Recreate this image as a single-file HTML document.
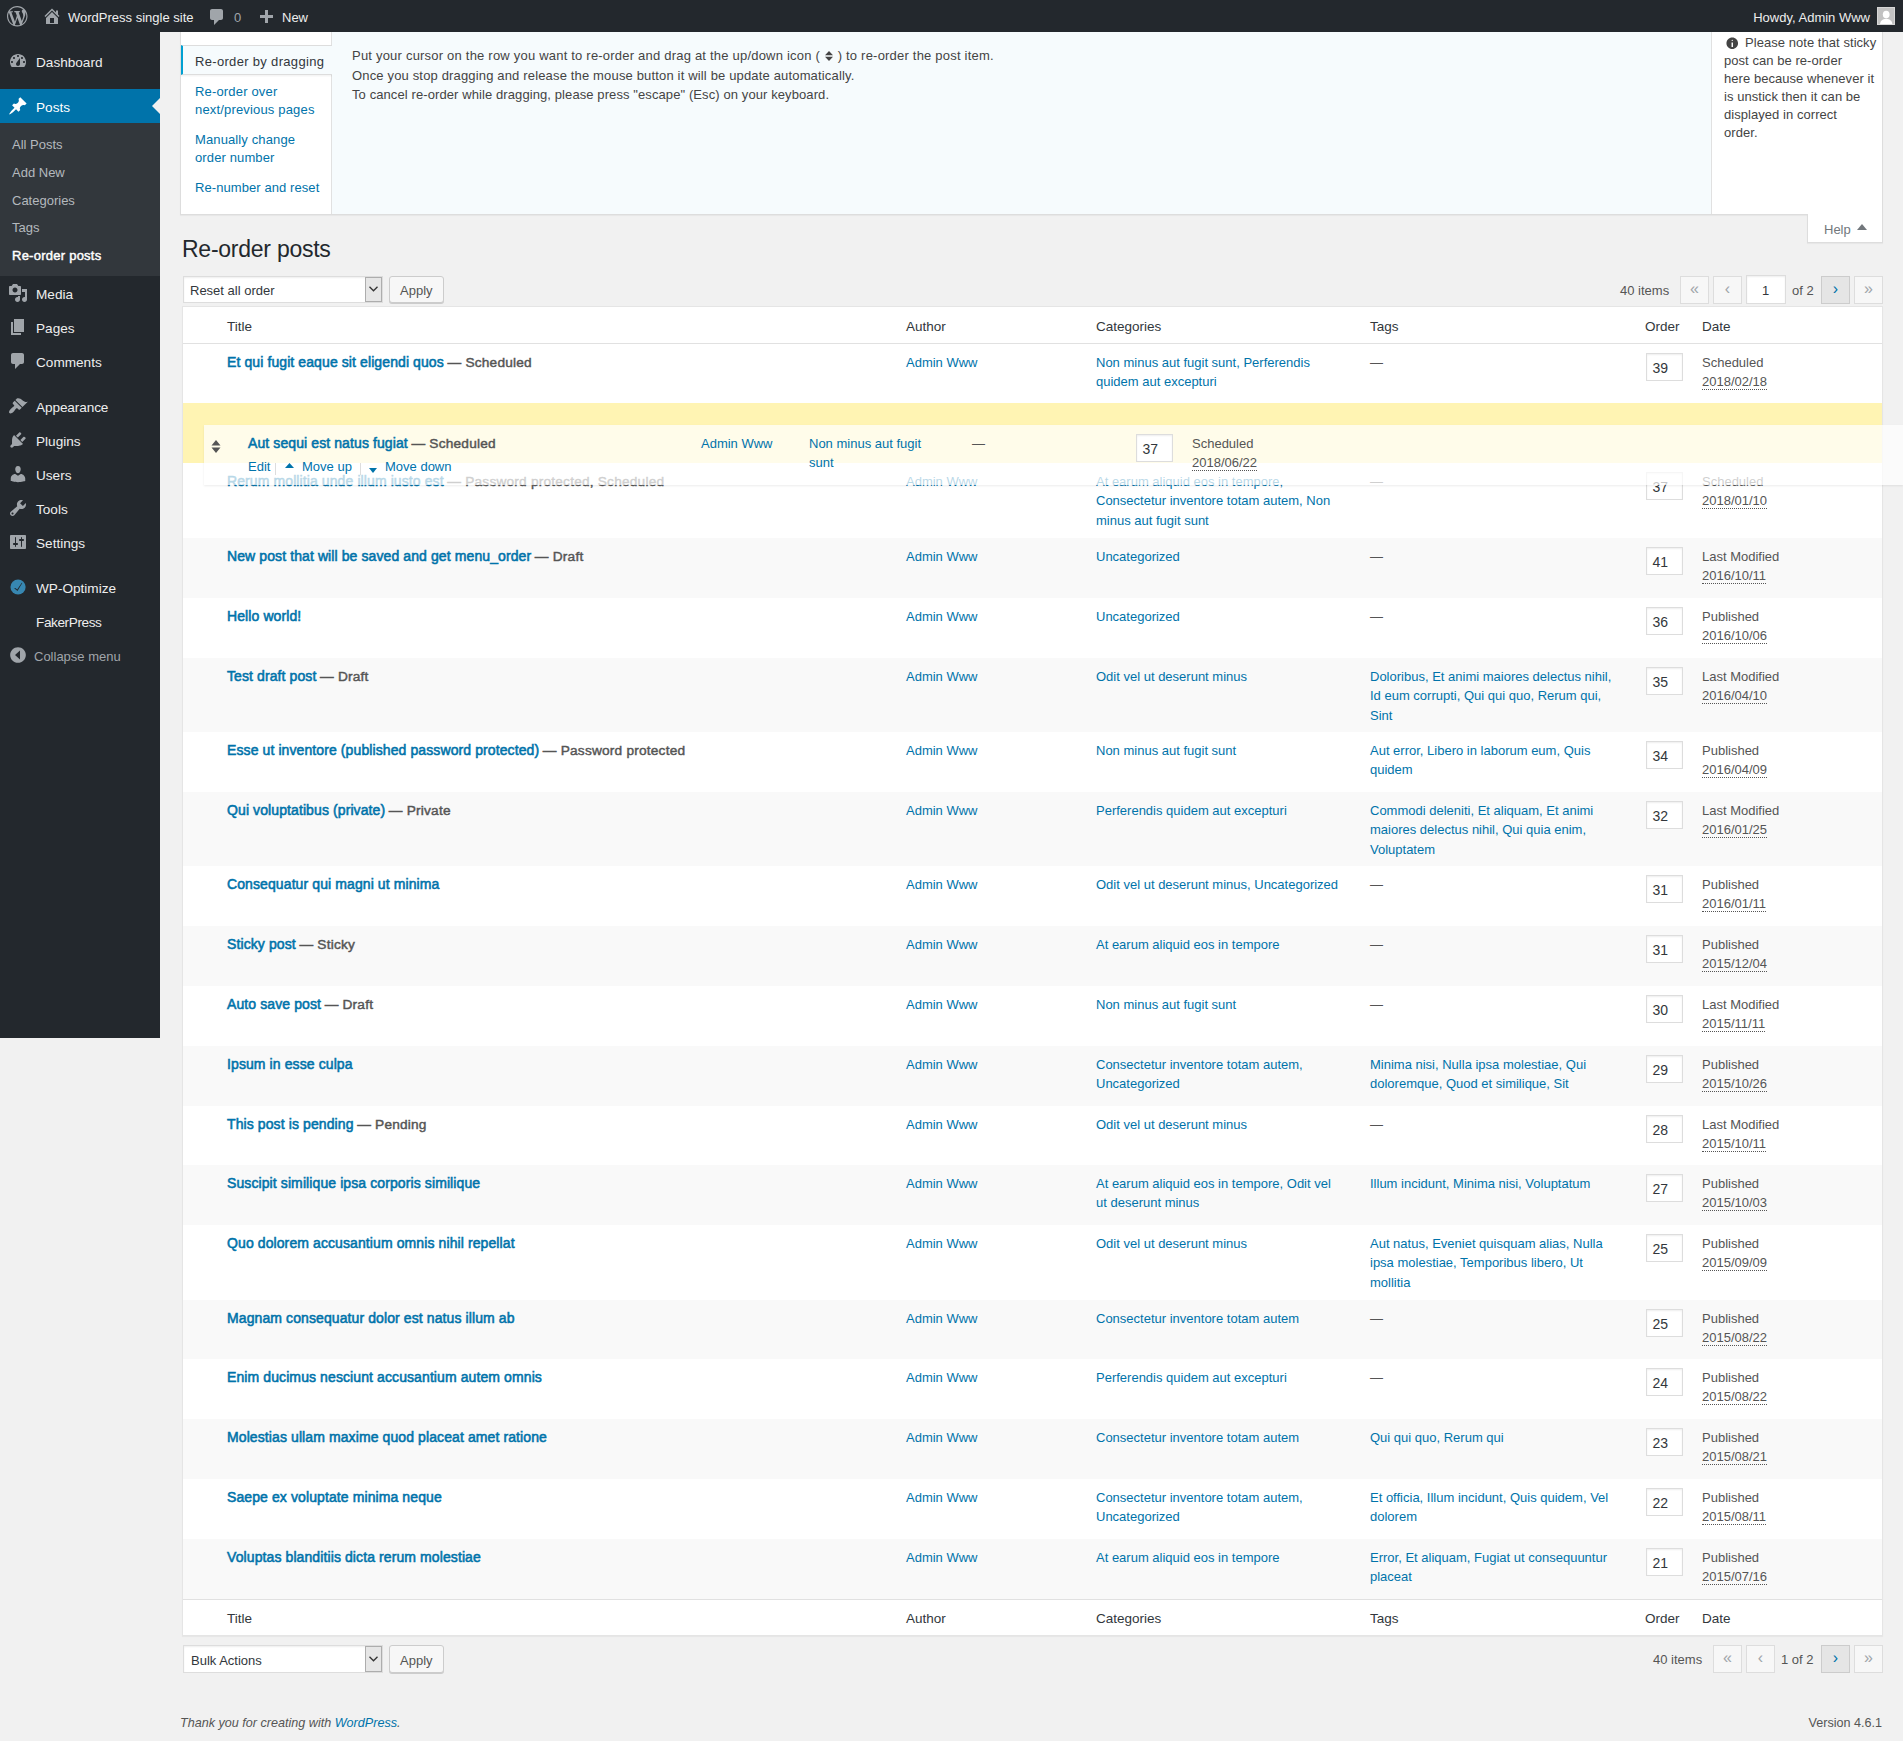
<!DOCTYPE html>
<html><head><meta charset="utf-8"><title>Re-order posts</title>
<style>
*{box-sizing:border-box}
html,body{margin:0;padding:0}
body{width:1903px;height:1741px;overflow:hidden;position:relative;background:#f1f1f1;font-family:"Liberation Sans",sans-serif;font-size:13px;color:#444;}
a{color:#0073aa;text-decoration:none}
.abs{position:absolute;white-space:nowrap}
.t13{font-size:13px;line-height:20px}
.t14{font-size:14px;line-height:20px}
#bar{position:absolute;left:0;top:0;width:1903px;height:32px;background:#23282d;color:#eee}
#menuback{position:absolute;left:0;top:32px;width:160px;height:1006px;background:#23282d}
.mi{position:absolute;left:36px;font-size:13.6px;line-height:20px;color:#eee;white-space:nowrap}
.smi{position:absolute;left:12px;font-size:13px;line-height:20px;color:#b4b9be;white-space:nowrap}
.ico{position:absolute;fill:#a0a5aa}
/* help */
#help{position:absolute;left:180px;top:32px;width:1703px;height:183px;background:#fff;border:1px solid #ddd;border-top:none;box-shadow:0 1px 1px rgba(0,0,0,.04)}
#helpback{position:absolute;left:331px;top:32px;width:1381px;height:182px;background:#f6fbfd;border-left:1px solid #e1e1e1;border-right:1px solid #e1e1e1}
#acttab{position:absolute;left:181px;top:45px;width:151px;height:30px;background:#f6fbfd;border-left:2px solid #00a0d2;border-top:1px solid #ddd;border-bottom:1px solid #ddd;box-shadow:0 2px 0 rgba(0,0,0,.02),0 1px 0 rgba(0,0,0,.02)}
#helptab{position:absolute;left:1807px;top:214px;width:76px;height:29px;background:#fff;border:1px solid #ddd;border-top:none;box-shadow:0 1px 1px rgba(0,0,0,.04)}
/* controls */
.sel{position:absolute;background:#fff;border:1px solid #ddd;box-shadow:inset 0 1px 2px rgba(0,0,0,.07)}
.selarr{position:absolute;background:#e6e6e6;border:1px solid #adadad}
.btn{position:absolute;background:#f7f7f7;border:1px solid #ccc;border-radius:3px;box-shadow:0 1px 0 #ccc}
.pbtn{position:absolute;width:29px;height:28px;background:#f7f7f7;border:1px solid #ddd;text-align:center;color:#a0a5aa;font-size:16px;line-height:24px}
.pbtn.on{background:#e5e5e5;border-color:#ccc;color:#0073aa}
/* table */
#table{position:absolute;left:182px;top:306px;width:1701px;height:1330px;background:#fff;border:1px solid #e5e5e5;box-shadow:0 1px 1px rgba(0,0,0,.04)}
.th{position:absolute;font-size:13.5px;line-height:20px;color:#32373c;white-space:nowrap}
.row{position:absolute;left:183px;width:1699px}
.row .c{position:absolute;top:8.5px;font-size:13px;line-height:19.5px;white-space:nowrap;color:#555}
.row .ti{left:44px}
.row .au{left:723px}
.row .ca{left:913px}
.row .tg{left:1187px}
.row .dt{left:1519px}
.rt{font-size:14px;letter-spacing:0.1px;-webkit-text-stroke:0.55px #0073aa}
.st{font-size:13.7px;letter-spacing:0.2px;color:#555;-webkit-text-stroke:0.45px #555}
.ord{position:absolute;left:1463px;top:9px;width:37px;height:28px;border:1px solid #ddd;background:#fff;box-shadow:inset 0 1px 2px rgba(0,0,0,.07);color:#32373c;font-size:14px;line-height:28px;padding-left:5.5px}
abbr{border-bottom:1px dotted #555;text-decoration:none}
.dash{color:#555}
#placeholder{position:absolute;left:183px;top:403px;width:1699px;height:60px;background:#fff4b3}
#helper{position:absolute;left:204px;top:425px;width:1699px;height:60px;background:rgba(255,255,255,.72);box-shadow:0 1px 2px rgba(0,0,0,.08)}
#helper .c{position:absolute;top:8.5px;font-size:13px;line-height:19.5px;white-space:nowrap;color:#555}
</style></head>
<body>
<!-- admin bar -->
<div id="bar">
  <svg class="ico" style="left:7px;top:6px" width="20.5" height="20.5" viewBox="0 0 20 20"><path d="M20 10c0-5.51-4.49-10-10-10C4.48 0 0 4.49 0 10c0 5.52 4.48 10 10 10 5.51 0 10-4.48 10-10zM7.78 15.37L4.37 6.22c.55-.02 1.170-.08 1.17-.08.5-.06.44-1.13-.06-1.11 0 0-1.45.11-2.37.11-.18 0-.37 0-.58-.01C4.120 2.690 6.870 1.110 10 1.110c2.330 0 4.450.87 6.050 2.34-.68-.11-1.650.39-1.650 1.580 0 .74.450 1.360.9 2.1.35.61.55 1.36.55 2.46 0 1.49-1.4 5-1.4 5l-3.03-8.37c.54-.02.82-.17.82-.17.5-.05.44-1.25-.06-1.22 0 0-1.44.12-2.38.12-.87 0-2.33-.12-2.33-.12-.5-.03-.56 1.200-.06 1.220l.92.08 1.26 3.41zM17.41 10c.24-.64.74-1.870.43-4.250.7 1.290 1.050 2.710 1.050 4.250 0 3.290-1.730 6.240-4.400 7.780.970-2.590 1.940-5.200 2.920-7.780zM6.1 18.09C3.12 16.65 1.11 13.53 1.11 10c0-1.3.23-2.48.72-3.59C3.25 10.3 4.670 14.200 6.100 18.090zm4.030-6.630l2.580 6.980c-.86.290-1.760.450-2.710.450-.790 0-1.570-.110-2.290-.330.810-2.380 1.620-4.740 2.420-7.100z"/></svg>
  <svg class="ico" style="left:42px;top:6px" width="20" height="20" viewBox="0 0 20 20"><path d="M16 8.5l1.53 1.53-1.06 1.06L10 4.62l-6.47 6.47-1.06-1.06L10 2.5l4 4v-2h2v4zm-6-2.46l6 5.99V18H4v-5.97zM12 17v-5H8v5h4z"/></svg>
  <div class="abs t13" style="left:68px;top:8px;color:#eee">WordPress single site</div>
  <svg class="ico" style="left:207px;top:7px" width="20" height="20" viewBox="0 0 20 20"><path d="M5 2h9c1.1 0 2 .9 2 2v7c0 1.1-.9 2-2 2h-2l-5 5v-5H5c-1.1 0-2-.9-2-2V4c0-1.1.9-2 2-2z"/></svg>
  <div class="abs t13" style="left:234px;top:8px;color:#a0a5aa">0</div>
  <svg class="ico" style="left:256px;top:8px" width="20" height="20" viewBox="0 0 20 20"><path d="M17 7v3h-5v5H9v-5H4V7h5V2h3v5h5z"/></svg>
  <div class="abs t13" style="left:282px;top:8px;color:#eee">New</div>
  <div class="abs t13" style="right:33px;top:8px;color:#eee">Howdy, Admin Www</div>
  <div class="abs" style="left:1877px;top:7px;width:18px;height:18px;background:#c2c2c2;border:1px solid #d6d6d6;overflow:hidden">
    <svg style="position:absolute;left:-1px;top:-1px" width="18" height="18" viewBox="0 0 18 18"><ellipse cx="9.2" cy="7.6" rx="3.4" ry="3.8" fill="#fff"/><path d="M3 18c0-3.5 1.8-6 6.2-6s6.2 2.5 6.2 6z" fill="#fff"/></svg>
  </div>
</div>

<!-- sidebar -->
<div id="menuback"></div>
<div class="abs" style="left:0;top:89px;width:160px;height:34px;background:#0073aa"></div>
<div class="abs" style="left:152px;top:98px;width:0;height:0;border-top:8px solid transparent;border-bottom:8px solid transparent;border-right:8px solid #f1f1f1"></div>
<div class="abs" style="left:0;top:123px;width:160px;height:153px;background:#32373c"></div>
<!-- icons -->
<svg class="ico" style="left:8px;top:51px" width="20" height="20" viewBox="0 0 20 20"><path fill-rule="evenodd" d="M3.76 16h12.48c1.1-1.37 1.76-3.11 1.76-5 0-4.42-3.58-8-8-8s-8 3.58-8 8c0 1.89.66 3.63 1.76 5zM10 4c.55 0 1 .45 1 1s-.45 1-1 1-1-.45-1-1 .45-1 1-1zM6 6c.55 0 1 .45 1 1s-.45 1-1 1-1-.45-1-1 .45-1 1-1zm8 0c.55 0 1 .45 1 1s-.45 1-1 1-1-.45-1-1 .45-1 1-1zm-5.37 5.55L12 7v6c0 1.1-.9 2-2 2s-2-.9-2-2c0-.57.24-1.08.63-1.450zM4 10c.55 0 1 .45 1 1s-.45 1-1 1-1-.45-1-1 .45-1 1-1zm12 0c.55 0 1 .45 1 1s-.45 1-1 1-1-.45-1-1 .45-1 1-1z"/></svg>
<svg class="ico" style="left:8px;top:96px;fill:#fff" width="20" height="20" viewBox="0 0 20 20"><path fill-rule="evenodd" d="M10.44 3.02l1.82-1.82 6.36 6.35-1.83 1.82c-1.05-.68-2.48-.57-3.41.36l-.75.75c-.92.93-1.04 2.35-.35 3.41l-1.83 1.82-2.41-2.41-2.8 2.79c-.42.42-3.38 2.71-3.8 2.29s1.86-3.39 2.28-3.81l2.79-2.79L4.1 9.36l1.83-1.82c1.05.69 2.48.57 3.4-.36l.75-.75c.93-.92 1.05-2.35.36-3.41z"/></svg>
<svg class="ico" style="left:8px;top:283px" width="20" height="20" viewBox="0 0 20 20"><path fill-rule="evenodd" d="M13 11V4c0-.55-.45-1-1-1h-1.67L9 1H5L3.67 3H2c-.55 0-1 .45-1 1v7c0 .55.45 1 1 1h10c.55 0 1-.45 1-1zM7 4.5c1.38 0 2.5 1.12 2.5 2.5S8.38 9.5 7 9.5 4.5 8.38 4.5 7 5.62 4.5 7 4.5zM14 6h5v10.5c0 1.38-1.12 2.5-2.5 2.5S14 17.88 14 16.5s1.12-2.5 2.5-2.5c.17 0 .34.02.5.05V9h-3V6zm-4 8.05V13h2v3.5c0 1.38-1.12 2.5-2.5 2.5S7 17.88 7 16.5 8.12 14 9.5 14c.17 0 .34.02.5.05z"/></svg>
<svg class="ico" style="left:8px;top:317px" width="20" height="20" viewBox="0 0 20 20"><path fill-rule="evenodd" d="M6 15V2h10v13H6zm-1 1h8v2H3V5h2v11z"/></svg>
<svg class="ico" style="left:8px;top:351px" width="20" height="20" viewBox="0 0 20 20"><path fill-rule="evenodd" d="M5 2h9c1.1 0 2 .9 2 2v7c0 1.1-.9 2-2 2h-2l-5 5v-5H5c-1.1 0-2-.9-2-2V4c0-1.1.9-2 2-2z"/></svg>
<svg class="ico" style="left:8px;top:396px" width="20" height="20" viewBox="0 0 20 20"><path fill-rule="evenodd" d="M14.48 11.06L7.41 3.99l1.5-1.5c.5-.56 2.3-.47 3.51.32 1.21.8 1.43 1.28 2.91 2.1 1.18.64 2.45 1.26 4.45.85zm-.71.71L6.7 4.7 4.93 6.47c-.39.39-.39 1.02 0 1.41l1.06 1.06c.39.39.39 1.03 0 1.42-.6.6-1.43 1.11-2.21 1.69-.35.26-.7.53-1.01.84C1.430 14.230.4 16.080 1.4 17.070c.99 1 2.840-.03 4.180-1.360.31-.31.58-.66.85-1.020.57-.78 1.080-1.610 1.690-2.210.39-.39 1.020-.39 1.410 0l1.060 1.060c.39.39 1.020.39 1.410 0z"/></svg>
<svg class="ico" style="left:8px;top:430px" width="20" height="20" viewBox="0 0 20 20"><path fill-rule="evenodd" d="M13.11 4.36L9.87 7.6 8 5.73l3.24-3.24c.35-.34 1.05-.2 1.56.32.52.51.66 1.21.31 1.55zm-8 1.77l.91-1.12 9.01 9.01-1.19.84c-.71.71-2.630 1.160-3.820 1.160H6.14L4.9 17.26c-.59.59-1.54.59-2.12 0-.59-.58-.59-1.53 0-2.12l1.24-1.24v-3.88c0-1.13.4-3.19 1.09-3.89zm7.26 3.97l3.24-3.24c.34-.35 1.04-.21 1.55.31.52.51.66 1.21.31 1.55l-3.24 3.25z"/></svg>
<svg class="ico" style="left:8px;top:464px" width="20" height="20" viewBox="0 0 20 20"><path fill-rule="evenodd" d="M10 9.25c-2.27 0-2.73-3.44-2.73-3.44C7 4.02 7.82 2 9.97 2c2.16 0 2.98 2.02 2.71 3.81 0 0-.41 3.44-2.68 3.44zm0 2.57L12.72 10c2.39 0 4.52 2.33 4.52 4.53v2.49s-3.65 1.13-7.24 1.13c-3.65 0-7.24-1.13-7.24-1.13v-2.49c0-2.25 1.94-4.48 4.47-4.48z"/></svg>
<svg class="ico" style="left:8px;top:498px" width="20" height="20" viewBox="0 0 20 20"><path fill-rule="evenodd" d="M16.68 9.77c-1.34 1.34-3.3 1.67-4.95.99l-5.41 6.52c-.99.99-2.59.99-3.58 0s-.99-2.59 0-3.57l6.52-5.42c-.68-1.65-.35-3.61.99-4.95 1.28-1.28 3.12-1.62 4.72-1.06l-2.89 2.89 2.82 2.82 2.86-2.87c.53 1.58.18 3.39-1.08 4.65zM3.81 16.21c.4.39 1.04.39 1.430 0 .4-.4.4-1.04 0-1.43-.39-.4-1.03-.4-1.430 0-.39.39-.39 1.030 0 1.430z"/></svg>
<svg class="ico" style="left:8px;top:532px" width="20" height="20" viewBox="0 0 20 20"><path fill-rule="evenodd" d="M18 16V4c0-.55-.45-1-1-1H3c-.55 0-1 .45-1 1v12c0 .55.45 1 1 1h14c.55 0 1-.45 1-1zM8 11h1c.55 0 1 .45 1 1s-.45 1-1 1H8v1.5c0 .28-.22.5-.5.5s-.5-.22-.5-.5V13H6c-.55 0-1-.45-1-1s.45-1 1-1h1V5.5c0-.28.22-.5.5-.5s.5.22.5.5V11zm5-2h-1c-.55 0-1-.45-1-1s.45-1 1-1h1V5.5c0-.28.22-.5.5-.5s.5.22.5.5V7h1c.55 0 1 .45 1 1s-.45 1-1 1h-1v5.5c0 .28-.22.5-.5.5s-.5-.22-.5-.5V9z"/></svg>
<svg class="ico" style="left:8px;top:577px" width="20" height="20" viewBox="0 0 20 20"><circle cx="10.05" cy="10" r="7.6" fill="#3787b1"/><path d="M6.1 11.2l1.2-.3 1.9 1.6 4.6-6.8.5.3-4.8 8z" fill="#23282d"/></svg>
<svg class="ico" style="left:8px;top:645px" width="20" height="20" viewBox="0 0 20 20"><path fill-rule="evenodd" d="M10 2.16c4.33 0 7.84 3.51 7.84 7.84S14.33 17.84 10 17.84 2.16 14.33 2.16 10 5.71 2.16 10 2.160zM12 5.5L7 10l5 4.5z"/></svg>
<div class="mi" style="top:53px">Dashboard</div>
<div class="mi" style="top:98px;color:#fff">Posts</div>
<div class="smi" style="top:135px">All Posts</div>
<div class="smi" style="top:163px">Add New</div>
<div class="smi" style="top:191px">Categories</div>
<div class="smi" style="top:218px">Tags</div>
<div class="smi" style="top:246px;color:#fff;letter-spacing:0.25px;-webkit-text-stroke:0.45px #fff">Re-order posts</div>
<div class="mi" style="top:285px">Media</div>
<div class="mi" style="top:319px">Pages</div>
<div class="mi" style="top:353px">Comments</div>
<div class="mi" style="top:398px;letter-spacing:-0.1px">Appearance</div>
<div class="mi" style="top:432px">Plugins</div>
<div class="mi" style="top:466px">Users</div>
<div class="mi" style="top:500px">Tools</div>
<div class="mi" style="top:534px">Settings</div>
<div class="mi" style="top:579px">WP-Optimize</div>
<div class="mi" style="top:613px;letter-spacing:-0.4px">FakerPress</div>
<div class="smi" style="left:34px;top:647px;color:#a0a5aa">Collapse menu</div>

<!-- help panel -->
<div id="help"></div>
<div id="helpback"></div>
<div class="abs" style="left:181px;top:45px;width:150px;height:1px;background:#ddd"></div>
<div id="acttab"></div>
<div class="abs t13" style="left:195px;top:52px;color:#32373c;letter-spacing:0.32px">Re-order by dragging</div>
<div class="abs" style="left:195px;top:83px;font-size:13px;line-height:18px;letter-spacing:0.17px"><a>Re-order over<br>next/previous pages</a></div>
<div class="abs" style="left:195px;top:131px;font-size:13px;line-height:18px;letter-spacing:0.12px"><a>Manually change<br>order number</a></div>
<div class="abs" style="left:195px;top:179px;font-size:13px;line-height:18px;letter-spacing:0.08px"><a>Re-number and reset</a></div>
<div class="abs" style="left:352px;top:46px;font-size:13px;line-height:19.5px;color:#444;letter-spacing:0.21px">Put your cursor on the row you want to re-order and drag at the up/down icon ( <svg width="8" height="10" viewBox="0 0 8 10" style="vertical-align:-1px;margin:0 1px"><path d="M4 0L8 4.3H0zM0 5.7h8L4 10z" fill="#444"/></svg> ) to re-order the post item.</div>
<div class="abs" style="left:352px;top:65.5px;font-size:13px;line-height:19.5px;color:#444;letter-spacing:0.16px">Once you stop dragging and release the mouse button it will be update automatically.</div>
<div class="abs" style="left:352px;top:85px;font-size:13px;line-height:19.5px;color:#444;letter-spacing:0.095px">To cancel re-order while dragging, please press "escape" (Esc) on your keyboard.</div>
<svg class="abs" style="left:1725px;top:35.5px" width="14.5" height="14.5" viewBox="0 0 20 20"><path fill="#444" fill-rule="evenodd" d="M10 2c4.42 0 8 3.58 8 8s-3.58 8-8 8-8-3.58-8-8 3.58-8 8-8zm1 4c0-.55-.45-1-1-1s-1 .45-1 1 .45 1 1 1 1-.45 1-1zm0 9V9H9v6h2z"/></svg>
<div class="abs" style="left:1724px;top:34px;font-size:13px;line-height:18px;color:#444;letter-spacing:0.05px;text-indent:21px">Please note that sticky<br>post can be re-order<br>here because whenever it<br>is unstick then it can be<br>displayed in correct<br>order.</div>
<div id="helptab"></div>
<div class="abs t13" style="left:1824px;top:220px;color:#72777c">Help</div>
<div class="abs" style="left:1857px;top:224px;width:0;height:0;border-left:5px solid transparent;border-right:5px solid transparent;border-bottom:6px solid #72777c"></div>

<!-- title -->
<div class="abs" style="left:182px;top:234px;font-size:23px;letter-spacing:-0.25px;line-height:30px;color:#23282d">Re-order posts</div>

<!-- top tablenav -->
<div class="sel" style="left:183px;top:276px;width:200px;height:27px"></div>
<div class="selarr" style="left:365px;top:277px;width:17px;height:25px"></div>
<svg class="abs" style="left:369px;top:286px" width="9" height="6" viewBox="0 0 9 6"><path d="M.5.8l4 4 4-4" stroke="#333" stroke-width="1.3" fill="none"/></svg>
<div class="abs t13" style="left:190px;top:281px;color:#32373c">Reset all order</div>
<div class="btn" style="left:389px;top:276px;width:55px;height:27px"></div>
<div class="abs t13" style="left:400px;top:281px;color:#555">Apply</div>
<div class="abs t13" style="left:1620px;top:281px;color:#555">40 items</div>
<div class="pbtn" style="left:1680px;top:276px">«</div>
<div class="pbtn" style="left:1713px;top:276px">‹</div>
<div class="sel" style="left:1746px;top:275px;width:40px;height:29px"></div>
<div class="abs t13" style="left:1762px;top:281px;color:#32373c">1</div>
<div class="abs t13" style="left:1792px;top:281px;color:#555">of 2</div>
<div class="pbtn on" style="left:1821px;top:276px">›</div>
<div class="pbtn" style="left:1854px;top:276px">»</div>

<!-- table -->
<div id="table"></div>
<div class="abs" style="left:183px;top:343px;width:1699px;height:1px;background:#e1e1e1"></div>
<div class="th" style="left:227px;top:317px">Title</div>
<div class="th" style="left:906px;top:317px">Author</div>
<div class="th" style="left:1096px;top:317px">Categories</div>
<div class="th" style="left:1370px;top:317px">Tags</div>
<div class="th" style="left:1645px;top:317px">Order</div>
<div class="th" style="left:1702px;top:317px">Date</div>

<div class="row" style="top:344px;height:59px;background:#fff">
<div class="c ti"><a class="rt">Et qui fugit eaque sit eligendi quos</a> <span class="st">— Scheduled</span></div>
<div class="c au"><a>Admin Www</a></div>
<div class="c ca"><a>Non minus aut fugit sunt, Perferendis<br>quidem aut excepturi</a></div>
<div class="c tg"><span class="dash">—</span></div>
<div class="ord">39</div>
<div class="c dt">Scheduled<br><abbr>2018/02/18</abbr></div>
</div>
<div class="row" style="top:463px;height:75px;background:#fff">
<div class="c ti"><a class="rt">Rerum mollitia unde illum iusto est</a> <span class="st">— Password protected, Scheduled</span></div>
<div class="c au"><a>Admin Www</a></div>
<div class="c ca"><a>At earum aliquid eos in tempore,<br>Consectetur inventore totam autem, Non<br>minus aut fugit sunt</a></div>
<div class="c tg"><span class="dash">—</span></div>
<div class="ord">37</div>
<div class="c dt">Scheduled<br><abbr>2018/01/10</abbr></div>
</div>
<div class="row" style="top:538px;height:60px;background:#f9f9f9">
<div class="c ti"><a class="rt">New post that will be saved and get menu_order</a> <span class="st">— Draft</span></div>
<div class="c au"><a>Admin Www</a></div>
<div class="c ca"><a>Uncategorized</a></div>
<div class="c tg"><span class="dash">—</span></div>
<div class="ord">41</div>
<div class="c dt">Last Modified<br><abbr>2016/10/11</abbr></div>
</div>
<div class="row" style="top:598px;height:60px;background:#fff">
<div class="c ti"><a class="rt">Hello world!</a></div>
<div class="c au"><a>Admin Www</a></div>
<div class="c ca"><a>Uncategorized</a></div>
<div class="c tg"><span class="dash">—</span></div>
<div class="ord">36</div>
<div class="c dt">Published<br><abbr>2016/10/06</abbr></div>
</div>
<div class="row" style="top:658px;height:74px;background:#f9f9f9">
<div class="c ti"><a class="rt">Test draft post</a> <span class="st">— Draft</span></div>
<div class="c au"><a>Admin Www</a></div>
<div class="c ca"><a>Odit vel ut deserunt minus</a></div>
<div class="c tg"><a>Doloribus, Et animi maiores delectus nihil,<br>Id eum corrupti, Qui qui quo, Rerum qui,<br>Sint</a></div>
<div class="ord">35</div>
<div class="c dt">Last Modified<br><abbr>2016/04/10</abbr></div>
</div>
<div class="row" style="top:732px;height:60px;background:#fff">
<div class="c ti"><a class="rt">Esse ut inventore (published password protected)</a> <span class="st">— Password protected</span></div>
<div class="c au"><a>Admin Www</a></div>
<div class="c ca"><a>Non minus aut fugit sunt</a></div>
<div class="c tg"><a>Aut error, Libero in laborum eum, Quis<br>quidem</a></div>
<div class="ord">34</div>
<div class="c dt">Published<br><abbr>2016/04/09</abbr></div>
</div>
<div class="row" style="top:792px;height:74px;background:#f9f9f9">
<div class="c ti"><a class="rt">Qui voluptatibus (private)</a> <span class="st">— Private</span></div>
<div class="c au"><a>Admin Www</a></div>
<div class="c ca"><a>Perferendis quidem aut excepturi</a></div>
<div class="c tg"><a>Commodi deleniti, Et aliquam, Et animi<br>maiores delectus nihil, Qui quia enim,<br>Voluptatem</a></div>
<div class="ord">32</div>
<div class="c dt">Last Modified<br><abbr>2016/01/25</abbr></div>
</div>
<div class="row" style="top:866px;height:60px;background:#fff">
<div class="c ti"><a class="rt">Consequatur qui magni ut minima</a></div>
<div class="c au"><a>Admin Www</a></div>
<div class="c ca"><a>Odit vel ut deserunt minus, Uncategorized</a></div>
<div class="c tg"><span class="dash">—</span></div>
<div class="ord">31</div>
<div class="c dt">Published<br><abbr>2016/01/11</abbr></div>
</div>
<div class="row" style="top:926px;height:60px;background:#f9f9f9">
<div class="c ti"><a class="rt">Sticky post</a> <span class="st">— Sticky</span></div>
<div class="c au"><a>Admin Www</a></div>
<div class="c ca"><a>At earum aliquid eos in tempore</a></div>
<div class="c tg"><span class="dash">—</span></div>
<div class="ord">31</div>
<div class="c dt">Published<br><abbr>2015/12/04</abbr></div>
</div>
<div class="row" style="top:986px;height:60px;background:#fff">
<div class="c ti"><a class="rt">Auto save post</a> <span class="st">— Draft</span></div>
<div class="c au"><a>Admin Www</a></div>
<div class="c ca"><a>Non minus aut fugit sunt</a></div>
<div class="c tg"><span class="dash">—</span></div>
<div class="ord">30</div>
<div class="c dt">Last Modified<br><abbr>2015/11/11</abbr></div>
</div>
<div class="row" style="top:1046px;height:60px;background:#f9f9f9">
<div class="c ti"><a class="rt">Ipsum in esse culpa</a></div>
<div class="c au"><a>Admin Www</a></div>
<div class="c ca"><a>Consectetur inventore totam autem,<br>Uncategorized</a></div>
<div class="c tg"><a>Minima nisi, Nulla ipsa molestiae, Qui<br>doloremque, Quod et similique, Sit</a></div>
<div class="ord">29</div>
<div class="c dt">Published<br><abbr>2015/10/26</abbr></div>
</div>
<div class="row" style="top:1106px;height:59px;background:#fff">
<div class="c ti"><a class="rt">This post is pending</a> <span class="st">— Pending</span></div>
<div class="c au"><a>Admin Www</a></div>
<div class="c ca"><a>Odit vel ut deserunt minus</a></div>
<div class="c tg"><span class="dash">—</span></div>
<div class="ord">28</div>
<div class="c dt">Last Modified<br><abbr>2015/10/11</abbr></div>
</div>
<div class="row" style="top:1165px;height:60px;background:#f9f9f9">
<div class="c ti"><a class="rt">Suscipit similique ipsa corporis similique</a></div>
<div class="c au"><a>Admin Www</a></div>
<div class="c ca"><a>At earum aliquid eos in tempore, Odit vel<br>ut deserunt minus</a></div>
<div class="c tg"><a>Illum incidunt, Minima nisi, Voluptatum</a></div>
<div class="ord">27</div>
<div class="c dt">Published<br><abbr>2015/10/03</abbr></div>
</div>
<div class="row" style="top:1225px;height:75px;background:#fff">
<div class="c ti"><a class="rt">Quo dolorem accusantium omnis nihil repellat</a></div>
<div class="c au"><a>Admin Www</a></div>
<div class="c ca"><a>Odit vel ut deserunt minus</a></div>
<div class="c tg"><a>Aut natus, Eveniet quisquam alias, Nulla<br>ipsa molestiae, Temporibus libero, Ut<br>mollitia</a></div>
<div class="ord">25</div>
<div class="c dt">Published<br><abbr>2015/09/09</abbr></div>
</div>
<div class="row" style="top:1300px;height:59px;background:#f9f9f9">
<div class="c ti"><a class="rt">Magnam consequatur dolor est natus illum ab</a></div>
<div class="c au"><a>Admin Www</a></div>
<div class="c ca"><a>Consectetur inventore totam autem</a></div>
<div class="c tg"><span class="dash">—</span></div>
<div class="ord">25</div>
<div class="c dt">Published<br><abbr>2015/08/22</abbr></div>
</div>
<div class="row" style="top:1359px;height:60px;background:#fff">
<div class="c ti"><a class="rt">Enim ducimus nesciunt accusantium autem omnis</a></div>
<div class="c au"><a>Admin Www</a></div>
<div class="c ca"><a>Perferendis quidem aut excepturi</a></div>
<div class="c tg"><span class="dash">—</span></div>
<div class="ord">24</div>
<div class="c dt">Published<br><abbr>2015/08/22</abbr></div>
</div>
<div class="row" style="top:1419px;height:60px;background:#f9f9f9">
<div class="c ti"><a class="rt">Molestias ullam maxime quod placeat amet ratione</a></div>
<div class="c au"><a>Admin Www</a></div>
<div class="c ca"><a>Consectetur inventore totam autem</a></div>
<div class="c tg"><a>Qui qui quo, Rerum qui</a></div>
<div class="ord">23</div>
<div class="c dt">Published<br><abbr>2015/08/21</abbr></div>
</div>
<div class="row" style="top:1479px;height:60px;background:#fff">
<div class="c ti"><a class="rt">Saepe ex voluptate minima neque</a></div>
<div class="c au"><a>Admin Www</a></div>
<div class="c ca"><a>Consectetur inventore totam autem,<br>Uncategorized</a></div>
<div class="c tg"><a>Et officia, Illum incidunt, Quis quidem, Vel<br>dolorem</a></div>
<div class="ord">22</div>
<div class="c dt">Published<br><abbr>2015/08/11</abbr></div>
</div>
<div class="row" style="top:1539px;height:60px;background:#f9f9f9">
<div class="c ti"><a class="rt">Voluptas blanditiis dicta rerum molestiae</a></div>
<div class="c au"><a>Admin Www</a></div>
<div class="c ca"><a>At earum aliquid eos in tempore</a></div>
<div class="c tg"><a>Error, Et aliquam, Fugiat ut consequuntur<br>placeat</a></div>
<div class="ord">21</div>
<div class="c dt">Published<br><abbr>2015/07/16</abbr></div>
</div>

<div id="placeholder"></div>

<div class="abs" style="left:183px;top:1599px;width:1699px;height:1px;background:#e1e1e1"></div>
<div class="th" style="left:227px;top:1609px">Title</div>
<div class="th" style="left:906px;top:1609px">Author</div>
<div class="th" style="left:1096px;top:1609px">Categories</div>
<div class="th" style="left:1370px;top:1609px">Tags</div>
<div class="th" style="left:1645px;top:1609px">Order</div>
<div class="th" style="left:1702px;top:1609px">Date</div>

<!-- helper (dragged row) -->
<div id="helper">
  <svg style="position:absolute;left:7px;top:15px" width="10" height="13" viewBox="0 0 10 13"><path d="M5 0l4.5 5.5H.5zM.5 7.5h9L5 13z" fill="#555"/></svg>
  <div class="c" style="left:44px"><a class="rt">Aut sequi est natus fugiat</a> <span class="st">— Scheduled</span></div>
  <div class="abs t13" style="left:44px;top:32px"><a>Edit</a></div>
  <div class="abs" style="left:71px;top:37.5px;width:1px;height:12px;background:#ddd"></div>
  <svg class="abs" style="left:81px;top:38px" width="9" height="5" viewBox="0 0 9 5"><path d="M4.5 0L9 5H0z" fill="#0073aa"/></svg>
  <div class="abs t13" style="left:98px;top:32px"><a>Move up</a></div>
  <div class="abs" style="left:155.5px;top:37.5px;width:1px;height:12px;background:#ddd"></div>
  <svg class="abs" style="left:165px;top:42.5px" width="8" height="5" viewBox="0 0 8 5"><path d="M0 0h8L4 5z" fill="#0073aa"/></svg>
  <div class="abs t13" style="left:181px;top:32px"><a>Move down</a></div>
  <div class="c" style="left:497px"><a>Admin Www</a></div>
  <div class="c" style="left:605px"><a>Non minus aut fugit<br>sunt</a></div>
  <div class="c" style="left:768px">—</div>
  <div class="ord" style="left:932px">37</div>
  <div class="c" style="left:988px">Scheduled<br><abbr>2018/06/22</abbr></div>
</div>

<!-- bottom tablenav -->
<div class="sel" style="left:183px;top:1645px;width:200px;height:28px"></div>
<div class="selarr" style="left:365px;top:1646px;width:17px;height:26px"></div>
<svg class="abs" style="left:369px;top:1656px" width="9" height="6" viewBox="0 0 9 6"><path d="M.5.8l4 4 4-4" stroke="#333" stroke-width="1.3" fill="none"/></svg>
<div class="abs t13" style="left:191px;top:1651px;color:#32373c">Bulk Actions</div>
<div class="btn" style="left:389px;top:1645px;width:55px;height:28px"></div>
<div class="abs t13" style="left:400px;top:1651px;color:#555">Apply</div>
<div class="abs t13" style="left:1653px;top:1650px;color:#555">40 items</div>
<div class="pbtn" style="left:1713px;top:1645px">«</div>
<div class="pbtn" style="left:1746px;top:1645px">‹</div>
<div class="abs t13" style="left:1781px;top:1650px;color:#555">1 of 2</div>
<div class="pbtn on" style="left:1821px;top:1645px">›</div>
<div class="pbtn" style="left:1854px;top:1645px">»</div>

<!-- footer -->
<div class="abs" style="left:180px;top:1713px;font-size:12.6px;line-height:20px;font-style:italic;color:#555">Thank you for creating with <a>WordPress</a>.</div>
<div class="abs" style="right:21px;top:1713px;font-size:12.6px;line-height:20px;color:#555">Version 4.6.1</div>
</body></html>
